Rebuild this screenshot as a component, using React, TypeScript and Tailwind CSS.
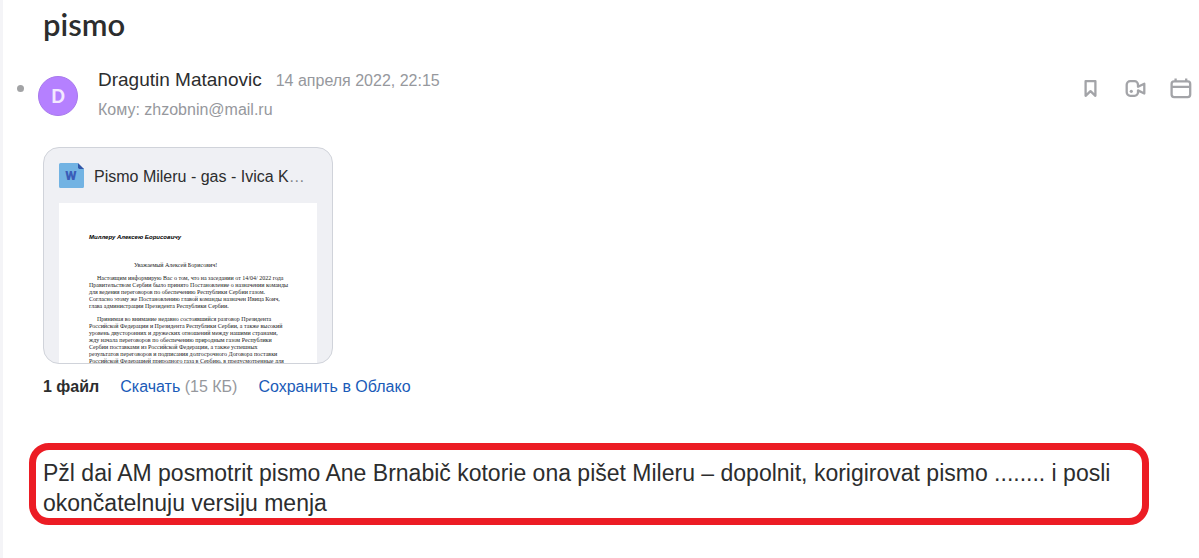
import type { ReactNode } from "react";

const openingLines = [
  "Правительством Сербии было принято Постановление о назначении команды",
  "для ведения переговоров по обеспечению Республики Сербии газом.",
  "Согласно этому же Постановлению главой команды назначен Ивица Коич,",
  "глава администрации Президента Республики Сербии.",
];

const mainLines = [
  "Российской Федерации и Президента Республики Сербии, а также высокий",
  "уровень двусторонних и дружеских отношений между нашими странами,",
  "жду начала переговоров по обеспечению природным газом Республики",
  "Сербии поставками из Российской Федерации, а также успешных",
  "результатов переговоров и подписания долгосрочного Договора поставки",
  "Российской Федерацией природного газа в Сербию, в предусмотренные для",
];

function IconButton({ label, children }: { label: string; children: ReactNode }) {
  return (
    <button type="button" aria-label={label} className="size-6 text-[#a3a4a8]">
      <svg viewBox="0 0 24 24" fill="none" stroke="currentColor" strokeWidth="2.3" className="size-6">
        {children}
      </svg>
    </button>
  );
}

function WordIcon() {
  return (
    <svg viewBox="0 0 25 25" className="size-[25px] shrink-0" aria-hidden="true">
      <path d="M1.5 0H19v5.500h6V23.500a1.500 1.500 0 0 1-1.500 1.500h-22A1.500 1.500 0 0 1 0 23.500v-22A1.500 1.500 0 0 1 1.500 0Z" fill="#72b3e3" />
      <path d="M19 0l6 6h-4.500A1.500 1.500 0 0 1 19 4.500Z" fill="#3157a8" />
      <text x="12" y="17" textAnchor="middle" className="fill-[#3a5cb8] font-['Roboto',sans-serif] text-[13px] font-black">
        W
      </text>
    </svg>
  );
}

function DocumentPreview() {
  return (
    <div className="mt-[13px] h-[160px] overflow-hidden bg-white pl-[30px] font-['Liberation_Serif','Noto_Sans',serif] text-[6px] leading-[7px] whitespace-nowrap text-[#222]">
      <p className="pt-[31px] font-['Liberation_Sans',sans-serif] font-bold text-black italic">Миллеру Алексею Борисовичу</p>
      <p className="mt-[21px] pl-[45px]">Уважаемый Алексей Борисович!</p>
      <div className="mt-[6px]">
        <p className="pl-2">Настоящим информирую Вас о том, что на заседании от 14/04/ 2022 года</p>
        {openingLines.map((line) => (
          <p key={line}>{line}</p>
        ))}
      </div>
      <div className="mt-[6px]">
        <p className="pl-2">Принимая во внимание недавно состоявшийся разговор Президента</p>
        {mainLines.map((line) => (
          <p key={line}>{line}</p>
        ))}
      </div>
    </div>
  );
}

function LetterHeader() {
  return (
    <header className="mt-[22px] flex items-start pr-[7px] pl-[14px]">
      <span className="mt-[21px] size-[7px] shrink-0 rounded-full bg-[#a2a3a5]" />
      <div className="mt-[12px] ml-[14px] flex size-10 shrink-0 items-center justify-center rounded-full border border-[#a879ec] bg-[#b580ff] font-['Lato',sans-serif] text-[18px] font-black text-[#f3e9ff]">
        D
      </div>
      <div className="ml-5 min-w-0 flex-1 pt-px">
        <div className="flex items-baseline gap-[14px] leading-[30px]">
          <span className="text-[19px]">Dragutin Matanovic</span>
          <time dateTime="2022-04-14T22:15" className="text-[16px] text-[#96989d]">14 апреля 2022, 22:15</time>
        </div>
        <p className="text-[16px] leading-[27px] text-[#96989d]">Кому: zhzobnin@mail.ru</p>
      </div>
      <div className="mt-[12px] flex gap-[21px]">
        <IconButton label="Сохранить">
          <path d="M7.600 5.200h9.800v14.600l-4.900-4.700-4.900 4.700z" strokeLinejoin="round" />
        </IconButton>
        <IconButton label="Видеозвонок">
          <path d="M7.200 5.200h4.300a3.500 3.500 0 0 1 3.500 3.500v2.100l6.300-3.100v9.800l-6.300-3.100v1.900a3.500 3.500 0 0 1-3.500 3.500H7.200a3.500 3.500 0 0 1-3.500-3.500V8.700a3.500 3.500 0 0 1 3.500-3.500Z" strokeLinejoin="round" />
          <circle cx="8.300" cy="15.300" r="1.600" fill="currentColor" stroke="none" />
        </IconButton>
        <IconButton label="Календарь">
          <rect x="3.600" y="5.400" width="18.600" height="15.700" rx="2.500" />
          <path d="M3.600 10.800h18.600M7.600 2.600v3M18.200 2.600v3" />
        </IconButton>
      </div>
    </header>
  );
}

function Attachments() {
  return (
    <section className="mt-[24px] pl-10 text-[16px]">
      <a href="#preview" className="block h-[217px] w-[290px] overflow-hidden rounded-2xl border border-[#d0d3da] bg-[#eff0f4] px-[15px] pt-[15px]">
        <div className="flex items-start">
          <WordIcon />
          <span className="ml-[10px] leading-[27px] whitespace-nowrap">
            Pismo Mileru - gas - Ivica K<span className="text-[#85878c]">…</span>
          </span>
        </div>
        <DocumentPreview />
      </a>
      <div className="mt-[11px] flex items-center gap-[21px] leading-6">
        <b>1 файл</b>
        <span className="text-[#96989d]">
          <a href="#download" className="text-[#1a5bb8]">Скачать</a> (15 КБ)
        </span>
        <a href="#cloud" className="text-[#1a5bb8]">Сохранить в Облако</a>
      </div>
    </section>
  );
}

export default function App() {
  return (
    <main className="min-h-screen border-l-[3px] border-[#f4f4f7] bg-white font-['Liberation_Sans',Arial,sans-serif] text-[#2c2d2e]">
      <h1 className="pt-[6px] pl-10 font-['Lato',sans-serif] text-[31px] leading-[36px] font-semibold">pismo</h1>
      <LetterHeader />
      <Attachments />
      <p className="mt-[44px] mr-[50px] ml-[26px] rounded-[20px] border-[7px] border-[#ec1c24] px-[7px] pt-[8px] text-[23px] leading-[30px]">
        Pžl dai AM posmotrit pismo Ane Brnabič kotorie ona pišet Mileru – dopolnit, korigirovat pismo ........ i posli okončatelnuju versiju menja
      </p>
    </main>
  );
}
